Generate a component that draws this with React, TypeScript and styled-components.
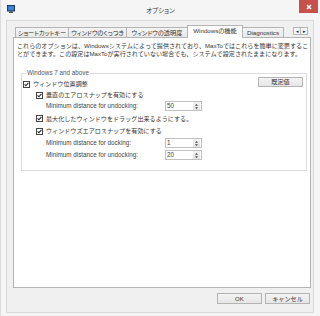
import React from "react";
import styled, { createGlobalStyle } from "styled-components";

const FONT = `"Liberation Sans", "Noto Sans CJK JP", sans-serif`;

const GlobalStyle = createGlobalStyle`
    html, body {
        margin: 0;
        padding: 0;
        background: #ffffff;
    }
    body {
        font-family: ${FONT};
        color: #333;
    }
    * {
        box-sizing: border-box;
    }
`;

const tabs = [
    { label: "ショートカットキー", width: 54 },
    { label: "ウィンドウのくっつき", width: 59 },
    { label: "ウィンドウの透明度", width: 62 },
    { label: "Windowsの機能", width: 56, active: true },
    { label: "Diagnostics", width: 42 },
];

const CheckMark = () => (
    <svg width="7" height="7" viewBox="0 0 7 7">
        <rect x="0.5" y="0.5" width="6" height="6" fill="#fff" stroke="#444" />
        <path d="M1.6 3.4 L2.9 4.8 L5.4 1.9" stroke="#222" strokeWidth="1.1" fill="none" />
    </svg>
);

const SpinArrows = () => (
    <svg width="5" height="7" viewBox="0 0 5 7">
        <path d="M2.5 1 L4 2.7 L1 2.7 Z" fill="#444" />
        <path d="M2.5 6 L4 4.3 L1 4.3 Z" fill="#444" />
    </svg>
);

const Spin = ({ value }: { value: string }) => (
    <SpinBox>
        <SpinValue>{value}</SpinValue>
        <SpinButtons>
            <SpinArrows />
        </SpinButtons>
    </SpinBox>
);

const App = () => {
    return (
        <>
            <GlobalStyle />
            <Window>
                <TitleBar>
                    <AppIcon>
                        <svg width="8" height="8" viewBox="0 0 8 8">
                            <rect x="0.5" y="0.5" width="7" height="5.5" fill="#2f6fb8" stroke="#1d3f6e" />
                            <rect x="1.5" y="1.5" width="5" height="3.5" fill="#3f86d6" />
                            <rect x="2" y="6.5" width="4" height="1.5" fill="#4a4a4a" />
                        </svg>
                    </AppIcon>
                    <Title>オプション</Title>
                    <CloseButton>
                        <svg width="6" height="6" viewBox="0 0 6 6">
                            <path d="M1 1 L5 5 M5 1 L1 5" stroke="#fff" strokeWidth="1.6" />
                        </svg>
                    </CloseButton>
                </TitleBar>

                <Client>
                    <TabStrip>
                        {tabs.map((t) => (
                            <Tab key={t.label} $active={!!t.active} $width={t.width}>
                                {t.label}
                            </Tab>
                        ))}
                        <TabScroller>
                            <ScrollButton>◂</ScrollButton>
                            <ScrollButton>▸</ScrollButton>
                        </TabScroller>
                    </TabStrip>

                    <Panel>
                        <Description>
                            これらのオプションは、Windowsシステムによって提供されており、MaxToではこれらを簡単に変更するこ
                            <br />
                            とができます。この設定はMaxToが実行されていない場合でも、システムで設定されたままになります。
                        </Description>

                        <Group>
                            <Legend>Windows 7 and above</Legend>
                            <HeaderRow>
                                <CheckRow $indent={0} $h={12}>
                                    <CheckMark />
                                    <RowText>ウィンドウ位置調整</RowText>
                                </CheckRow>
                                <DefaultButton>既定値</DefaultButton>
                            </HeaderRow>

                            <CheckRow $indent={13} $h={10}>
                                <CheckMark />
                                <RowText>垂直のエアロスナップを有効にする</RowText>
                            </CheckRow>
                            <SpinRow $h={12}>
                                <SpinLabel>Minimum distance for undocking:</SpinLabel>
                                <Spin value="50" />
                            </SpinRow>
                            <CheckRow $indent={13} $h={13}>
                                <CheckMark />
                                <RowText>最大化したウィンドウをドラッグ出来るようにする。</RowText>
                            </CheckRow>
                            <CheckRow $indent={13} $h={12}>
                                <CheckMark />
                                <RowText>ウィンドウズエアロスナップを有効にする</RowText>
                            </CheckRow>
                            <SpinRow $h={12}>
                                <SpinLabel>Minimum distance for docking:</SpinLabel>
                                <Spin value="1" />
                            </SpinRow>
                            <SpinRow $h={12}>
                                <SpinLabel>Minimum distance for undocking:</SpinLabel>
                                <Spin value="20" />
                            </SpinRow>
                        </Group>
                    </Panel>

                    <ButtonRow>
                        <DialogButton>OK</DialogButton>
                        <DialogButton>キャンセル</DialogButton>
                    </ButtonRow>
                </Client>
            </Window>
        </>
    );
};

const Window = styled.div`
    width: 320px;
    height: 316px;
    display: flex;
    flex-direction: column;
    background: #f5f5f5;
    border-left: 1px solid #dcdcdc;
    overflow: hidden;
`;

const TitleBar = styled.div`
    height: 20px;
    display: grid;
    grid-template-columns: 1fr auto 1fr;
    align-items: start;
`;

const AppIcon = styled.div`
    margin: 5px 0 0 6px;
    width: 8px;
    height: 8px;
    display: flex;
`;

const Title = styled.div`
    margin-top: 7px;
    font-size: 6.5px;
    line-height: 8px;
    font-feature-settings: "palt";
    color: #333;
`;

const CloseButton = styled.div`
    justify-self: end;
    margin-right: 2px;
    width: 19px;
    height: 13px;
    background: #c7504b;
    display: flex;
    align-items: center;
    justify-content: center;
`;

const Client = styled.div`
    flex: 1;
    margin: 0 6px 3px 5px;
    border: 1px solid #d9d9d9;
    background: #f0f0f0;
    padding: 4px 1px 0 6px;
    display: flex;
    flex-direction: column;
`;

const TabStrip = styled.div`
    height: 13px;
    display: flex;
    align-items: flex-end;
    padding-left: 2px;
`;

const Tab = styled.div<{ $active: boolean; $width: number }>`
    width: ${(p) => p.$width}px;
    height: ${(p) => (p.$active ? 13 : 11)}px;
    margin-left: -1px;
    &:first-child {
        margin-left: 0;
    }
    border: 1px solid #b4b4b4;
    border-bottom: none;
    background: ${(p) =>
        p.$active ? "#ffffff" : "linear-gradient(#f4f4f4, #e8e8e8)"};
    position: ${(p) => (p.$active ? "relative" : "static")};
    z-index: ${(p) => (p.$active ? 2 : "auto")};
    font-size: 6.2px;
    font-feature-settings: "palt";
    line-height: ${(p) => (p.$active ? 10 : 9)}px;
    text-align: center;
    white-space: nowrap;
    overflow: hidden;
    color: #333;
`;

const TabScroller = styled.div`
    margin-left: auto;
    margin-right: 4px;
    align-self: flex-start;
    margin-top: 2px;
    display: flex;
`;

const ScrollButton = styled.div`
    width: 8px;
    height: 8px;
    margin-left: -1px;
    border: 1px solid #b4b4b4;
    background: #f6f6f6;
    font-size: 5px;
    line-height: 6px;
    text-align: center;
    color: #222;
`;

const Panel = styled.div`
    position: relative;
    z-index: 1;
    margin-top: -1px;
    margin-right: 1px;
    height: 251px;
    background: #ffffff;
    border: 1px solid #b4b4b4;
    padding: 4px 0 0 3px;
    display: flex;
    flex-direction: column;
`;

const Description = styled.div`
    font-size: 6.1px;
    line-height: 8px;
    white-space: nowrap;
    color: #333;
`;

const Group = styled.fieldset`
    margin: 11px 3px 0 4px;
    padding: 1px 0 9px 1px;
    border: 1px solid #dcdcdc;
    min-width: 0;
`;

const Legend = styled.legend`
    margin-left: 3px;
    padding: 0 1px;
    font-size: 6.3px;
    line-height: 8px;
    color: #555;
`;

const HeaderRow = styled.div`
    display: flex;
    justify-content: space-between;
    align-items: flex-start;
`;

const CheckRow = styled.div<{ $indent: number; $h: number }>`
    height: ${(p) => p.$h}px;
    padding-left: ${(p) => p.$indent}px;
    display: flex;
    align-items: center;
    gap: 3px;
`;

const RowText = styled.span`
    font-size: 6.1px;
    line-height: 8px;
    white-space: nowrap;
    color: #333;
`;

const SpinRow = styled.div<{ $h: number }>`
    height: ${(p) => p.$h}px;
    padding-left: 23px;
    display: flex;
    align-items: center;
`;

const SpinLabel = styled.span`
    width: 119px;
    font-size: 6.3px;
    line-height: 8px;
    white-space: nowrap;
    color: #444;
`;

const SpinBox = styled.div`
    width: 37px;
    height: 10px;
    border: 1px solid #c0c0c0;
    background: #fff;
    display: flex;
    align-items: stretch;
`;

const SpinValue = styled.span`
    flex: 1;
    padding-left: 1px;
    font-size: 6.3px;
    line-height: 8px;
    color: #444;
`;

const SpinButtons = styled.div`
    width: 7px;
    margin: 0 1px 0 0;
    background: linear-gradient(#f2f2f2, #e2e2e2);
    display: flex;
    align-items: center;
    justify-content: center;
`;

const DefaultButton = styled.div`
    margin: -1px 3px 0 0;
    width: 45px;
    height: 10px;
    border: 1px solid #b4b4b4;
    background: linear-gradient(#f3f3f3, #e6e6e6);
    font-size: 6.1px;
    line-height: 8px;
    text-align: center;
    color: #333;
`;

const ButtonRow = styled.div`
    display: flex;
    justify-content: flex-end;
    gap: 3px;
    padding: 5px 2px 0 0;
`;

const DialogButton = styled.div`
    width: 45px;
    height: 11px;
    border: 1px solid #b4b4b4;
    background: linear-gradient(#f3f3f3, #e6e6e6);
    font-size: 6.1px;
    line-height: 9px;
    text-align: center;
    color: #333;
`;

export default App;
